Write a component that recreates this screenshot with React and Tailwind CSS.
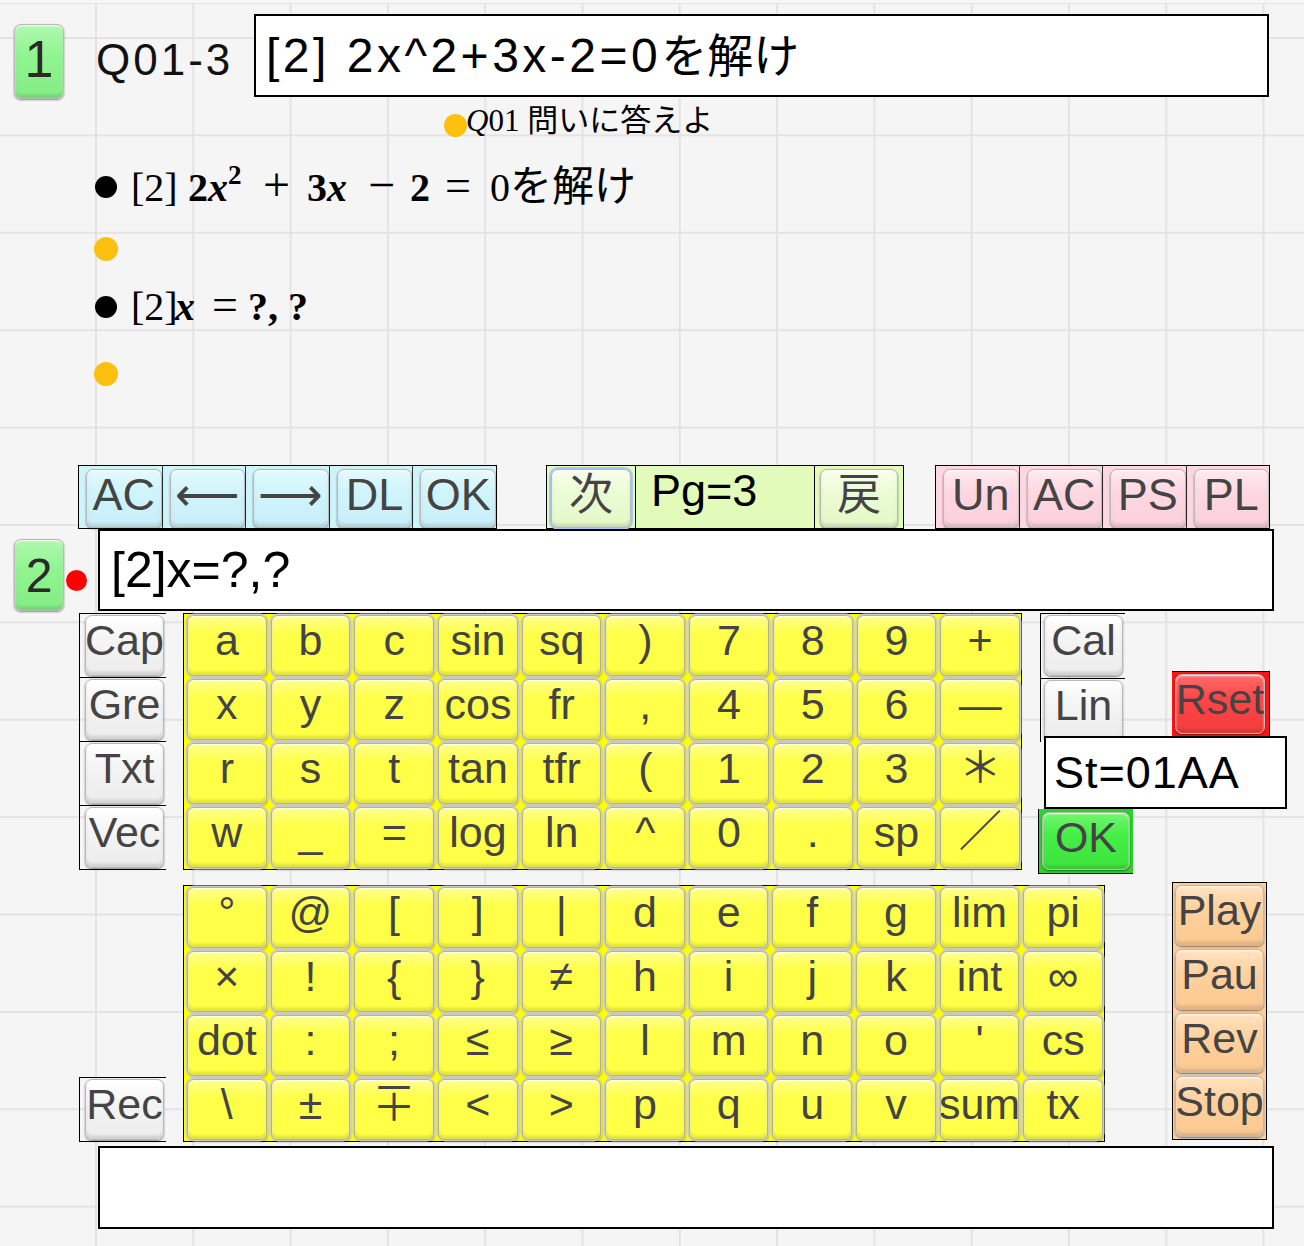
import React from 'react';

const RIM =
  'border border-[#b8b8b8] shadow-[inset_0_1px_2px_rgba(255,255,255,0.9),inset_0_-3px_3px_rgba(0,0,0,0.12),0_1px_2px_rgba(0,0,0,0.45)]';

const TONES = {
  yellow:
    'border border-[#b0b0a0] shadow-[inset_0_1px_2px_rgba(255,255,255,0.9),inset_0_-3px_3px_rgba(0,0,0,0.12),0_0_0_1.5px_#cdcdc4,1px_2px_2px_rgba(0,0,0,0.35)] bg-[linear-gradient(to_bottom,#ffff8c,#ffff4a_30%,#ffff44)]',
  blue: `${RIM} bg-[linear-gradient(to_bottom,#e4fafe,#cff4fc_40%,#c8eef8)]`,
  lime: `${RIM} bg-[linear-gradient(to_bottom,#f8feec,#ebfcd4_40%,#e4f8c8)]`,
  pink: `${RIM} bg-[linear-gradient(to_bottom,#ffeaf0,#ffd7e1_40%,#fbd0da)]`,
  gray: `${RIM} bg-[linear-gradient(to_bottom,#ffffff,#f4f4f4_40%,#ececec)]`,
  red: `${RIM} bg-[linear-gradient(to_bottom,#ff6c6c,#ff4646_40%,#f43c3c)]`,
  green: `${RIM} bg-[linear-gradient(to_bottom,#70f670,#46ee46_40%,#3de23d)]`,
  orange: `${RIM} bg-[linear-gradient(to_bottom,#ffe2c0,#ffd19e_40%,#fbc990)]`,
  mint: `${RIM} bg-[linear-gradient(to_bottom,#b0f9b0,#90f590_40%,#84ec84)]`,
};

const GRID_A = [
  ['a', 'b', 'c', 'sin', 'sq', ')', '7', '8', '9', '+'],
  ['x', 'y', 'z', 'cos', 'fr', ',', '4', '5', '6', '—'],
  ['r', 's', 't', 'tan', 'tfr', '(', '1', '2', '3', '＊'],
  ['w', '_', '=', 'log', 'ln', '^', '0', '.', 'sp', '／'],
];

const GRID_B = [
  ['°', '@', '[', ']', '|', 'd', 'e', 'f', 'g', 'lim', 'pi'],
  ['×', '!', '{', '}', '≠', 'h', 'i', 'j', 'k', 'int', '∞'],
  ['dot', ':', ';', '≤', '≥', 'l', 'm', 'n', 'o', "'", 'cs'],
  ['\\', '±', '∓', '<', '>', 'p', 'q', 'u', 'v', 'sum', 'tx'],
];

function Key({ label, tone = 'yellow', className = '', textCls = 'text-[43px] pt-[3px]', color = 'text-[#444]' }) {
  return (
    <div
      className={`flex items-start justify-center overflow-hidden whitespace-nowrap rounded-[7px] ${TONES[tone]} ${className}`}
    >
      <span className={`leading-none ${color} ${textCls}`}>{label}</span>
    </div>
  );
}

function Dot({ className }) {
  return <div className={`shrink-0 rounded-full ${className}`} />;
}

export default function App() {
  return (
    <div className="relative w-[1304px] h-[1246px] overflow-hidden bg-[#f5f5f5] bg-[linear-gradient(to_right,#e3e3e3_2px,transparent_2px),linear-gradient(to_bottom,#e3e3e3_2px,transparent_2px)] bg-size-[97.3px_97.4px] bg-position-[95px_37px] font-['Liberation_Sans','Noto_Sans_CJK_JP',sans-serif] text-black">
      <div className="h-[4px] border-b border-[#dce2ee] bg-[#f7f7f7]" />

      {/* question header */}
      <div className="flex pt-[10px]">
        <Key
          tone="mint"
          label="1"
          className="ml-[14px] mt-[10px] w-[50px] h-[75px]"
          textCls="text-[52px] pt-[8px]"
          color="text-[#2a2a2a]"
        />
        <div className="w-[190px] h-[83px] pl-[32px] pt-[24px]">
          <span className="block text-[44px] leading-none tracking-[3px] text-[#111]">Q01-3</span>
        </div>
        <div className="w-[1015px] h-[83px] border-2 border-black bg-white flex items-center pl-[10px]">
          <span className="text-[48px] leading-none tracking-[3.5px]">[2] 2x^2+3x-2=0</span>
          <span className="text-[46px] leading-none">を解け</span>
        </div>
      </div>

      {/* rendered question */}
      <div className="flex items-start ml-[444px] mt-[15px] h-[23px]">
        <Dot className="w-[23px] h-[23px] bg-[#fdc00f]" />
        <span className="-ml-[1px] -mt-[9px] text-[31px] leading-none font-['Liberation_Serif','Noto_Sans_CJK_JP',serif]">
          <i>Q</i>01 <span className="text-[31px]">問いに答えよ</span>
        </span>
      </div>

      <div className="flex items-center mt-[25px] h-[50px] font-['Liberation_Serif','Noto_Sans_CJK_JP',serif] text-[40px] leading-none">
        <Dot className="ml-[95px] w-[22px] h-[22px] bg-black" />
        <div className="ml-[14px] flex items-baseline -mt-[4px]">
          <span className="w-[57px]">[2]</span>
          <span className="w-[75px] font-bold">
            2<i>x</i>
            <span className="text-[27px] align-[17px]">2</span>
          </span>
          <span className="w-[44px] text-[48px]">+</span>
          <span className="w-[61px] font-bold">
            3<i>x</i>
          </span>
          <span className="w-[42px] text-[48px]">−</span>
          <span className="w-[35px] font-bold">2</span>
          <span className="w-[45px] text-[46px]">=</span>
          <span>0</span>
          <span className="text-[42px] font-['Noto_Sans_CJK_JP',sans-serif]">を解け</span>
        </div>
      </div>

      <Dot className="ml-[94px] mt-[25px] w-[24px] h-[24px] bg-[#fdc00f]" />

      <div className="flex items-center mt-[21px] h-[50px] font-['Liberation_Serif',serif] text-[40px] leading-none">
        <Dot className="ml-[95px] w-[22px] h-[22px] bg-black" />
        <div className="ml-[14px] flex items-baseline -mt-[4px]">
          <span className="w-[44px]">[2]</span>
          <span className="w-[37px] font-bold">
            <i>x</i>
          </span>
          <span className="w-[36px] text-[46px]">=</span>
          <span className="w-[20px] font-bold">?</span>
          <span className="w-[20px] font-bold">,</span>
          <span className="font-bold">?</span>
        </div>
      </div>

      <Dot className="ml-[94px] mt-[30px] w-[24px] h-[24px] bg-[#fdc00f]" />

      {/* toolbar */}
      <div className="flex items-start mt-[79px] h-[64px]">
        <div className="ml-[78px] flex w-[419px] h-[64px] border border-black bg-[#cdf3fb]">
          {['AC', '⟵', '⟶', 'DL', 'OK'].map((l) => (
            <div key={l} className="flex flex-1 pl-[7px] pt-[3px] border-r border-black/80 last:border-r-0">
              <Key tone="blue" label={l} className="flex-1" textCls="text-[45px] pt-[2px]" />
            </div>
          ))}
        </div>

        <div className="ml-[49px] flex w-[358px] h-[64px] border border-black bg-[#e2fbba]">
          <div className="flex w-[89px] px-[4px] pt-[3px] border-r border-black">
            <Key tone="lime" label="次" className="flex-1 ring-2 ring-[#a8c8f2]" textCls="text-[44px] pt-[3px]" />
          </div>
          <div className="w-[179px] pl-[15px] pt-[2px] border-r border-black">
            <span className="block text-[45px] leading-none">Pg=3</span>
          </div>
          <div className="flex flex-1 px-[5px] pt-[3px]">
            <Key tone="lime" label="戻" className="flex-1" textCls="text-[44px] pt-[3px]" />
          </div>
        </div>

        <div className="ml-[31px] flex w-[335px] h-[64px] border border-black bg-[#ffd7e0]">
          {['Un', 'AC', 'PS', 'PL'].map((l) => (
            <div key={l} className="flex flex-1 pl-[7px] pt-[3px] border-r border-black/80 last:border-r-0">
              <Key tone="pink" label={l} className="flex-1" textCls="text-[45px] pt-[2px]" />
            </div>
          ))}
        </div>
      </div>

      {/* answer row */}
      <div className="flex h-[82px]">
        <Key
          tone="mint"
          label="2"
          className="ml-[14px] mt-[10px] w-[50px] h-[72px]"
          textCls="text-[48px] pt-[12px]"
          color="text-[#2a2a2a]"
        />
        <Dot className="ml-[2px] mt-[41px] w-[21px] h-[21px] bg-[#ff0000]" />
        <div className="ml-[11px] w-[1176px] h-[82px] border-2 border-black bg-white flex items-center pl-[11px]">
          <span className="text-[50px] leading-none">[2]x=?,?</span>
        </div>
      </div>

      {/* keyboard upper */}
      <div className="flex mt-[2px]">
        <div className="ml-[79px] flex flex-col w-[87px] h-[257px] border-l border-y border-black divide-y divide-black">
          {['Cap', 'Gre', 'Txt', 'Vec'].map((l) => (
            <div key={l} className="flex flex-1 pl-[5px] pr-[2px] pt-[1px] pb-[1px]">
              <Key tone="gray" label={l} className="flex-1" />
            </div>
          ))}
        </div>

        <div className="ml-[17px] grid grid-cols-10 grid-rows-4 gap-x-[4px] gap-y-[3px] w-[839px] h-[257px] border border-black bg-[#ffff00] pl-[3px] pr-[1px] py-[1px]">
          {GRID_A.flat().map((l, i) => (
            <Key key={i} label={l} />
          ))}
        </div>

        <div className="ml-[16px] flex flex-col">
          <div className="flex">
            <div className="ml-[2px] flex flex-col w-[85px] h-[129px] border-l border-t border-black">
              <div className="flex h-[65px] pl-[3px] pr-[2px] pt-[1px] pb-[2px] border-b border-black">
                <Key tone="gray" label="Cal" className="flex-1" />
              </div>
              <div className="flex flex-1 pl-[3px] pr-[2px] pt-[1px]">
                <Key tone="gray" label="Lin" className="flex-1" />
              </div>
            </div>
            <div className="ml-[47px] mt-[58px] flex w-[98px] h-[65px] border-t border-r border-black bg-[#ff1414] pl-[3px] pr-[4px] py-[2px]">
              <Key tone="red" label="Rset" className="flex-1" />
            </div>
          </div>
          <div className="relative ml-[6px] -mt-[6px] flex items-center w-[243px] h-[73px] border-2 border-black bg-white pl-[8px]">
            <span className="text-[45px] leading-none tracking-[1px]">St=01AA</span>
          </div>
          <div className="flex w-[95px] h-[65px] border-l border-b border-black bg-[#2fd12f] p-[3px]">
            <Key tone="green" label="OK" className="flex-1" />
          </div>
        </div>
      </div>

      {/* keyboard lower */}
      <div className="flex mt-[8px]">
        <div className="ml-[79px] self-end flex w-[87px] h-[65px] border-l border-y border-black pl-[5px] pr-[2px] pt-[1px] pb-[1px]">
          <Key tone="gray" label="Rec" className="flex-1" />
        </div>

        <div className="ml-[17px] mt-[3px] grid grid-cols-11 grid-rows-4 gap-x-[4px] gap-y-[3px] w-[922px] h-[257px] border border-black bg-[#ffff00] pl-[3px] pr-[1px] py-[1px]">
          {GRID_B.flat().map((l, i) => (
            <Key key={i} label={l} />
          ))}
        </div>

        <div className="ml-[67px] flex flex-col gap-[3px] w-[95px] h-[258px] border border-black bg-[#ffcf99] p-[2px]">
          {['Play', 'Pau', 'Rev', 'Stop'].map((l) => (
            <Key key={l} tone="orange" label={l} className="flex-1" />
          ))}
        </div>
      </div>

      <div className="ml-[98px] mt-[4px] w-[1176px] h-[83px] border-2 border-black bg-white" />
    </div>
  );
}
